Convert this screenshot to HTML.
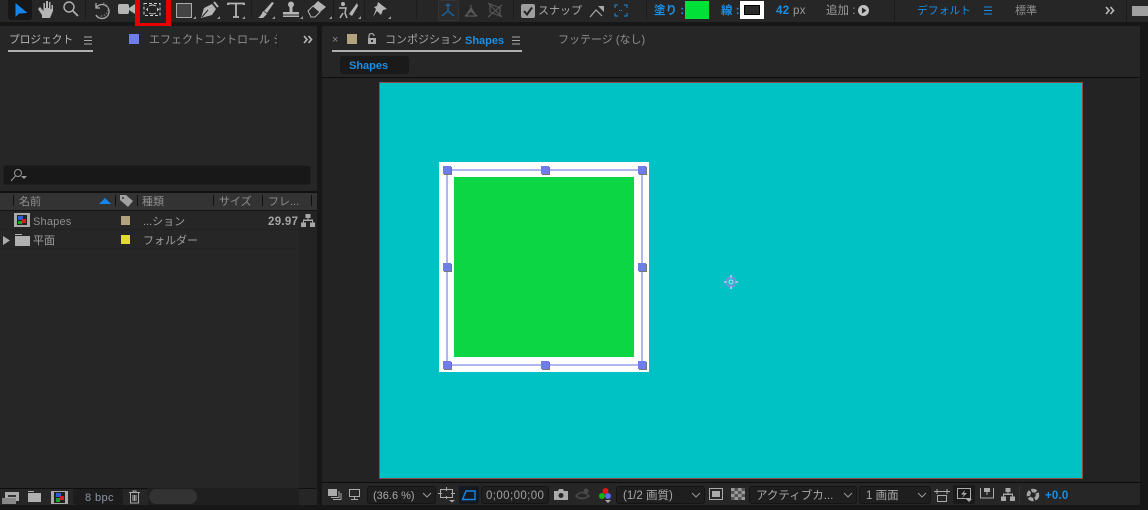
<!DOCTYPE html>
<html><head><meta charset="utf-8">
<style>
html,body{margin:0;padding:0;background:#171717;}
#r{position:relative;width:1148px;height:510px;overflow:hidden;background:#171717;font-family:"Liberation Sans","Noto Sans CJK JP",sans-serif;font-size:11px;color:#a8a8a8;}
#r div,#r svg,#r span.t{position:absolute;}
.t{white-space:nowrap;line-height:14px;}
.b{color:#1a8fe3;}
.dd{background:#1e1e1e;border:1px solid #141414;border-radius:3px;box-sizing:border-box;height:18px;}
.h{background:#6f7de8;width:8px;height:8px;box-shadow:1px 1px 0 #777;}
.sep{background:#1c1c1c;width:1px;}
.tk{background:#111;width:1px;height:11px;top:195px;}
</style></head><body><div id="r">

<!-- top toolbar -->
<div style="left:0;top:0;width:1148px;height:22px;background:#262626"></div>
<div style="left:8px;top:0;width:24px;height:20px;background:#171717;border-radius:0 0 3px 3px"></div>
<svg style="left:0;top:0" width="400" height="22" fill="none">
<path d="M15.500 3 L15.500 17 L19 13.500 L27.500 13 Z" fill="#1585ea"/>
<path d="M38 9 L42 15 V18 H50 L53 11 V5 H51.500 V9 H50.500 V2 H49 V8 H48 V1 H46 V8 H45 V3 H43.500 V11 L40 7 Z" fill="#b5b5b5"/>
<circle cx="69" cy="7" r="5" stroke="#b0b0b0" stroke-width="1.400"/><path d="M73 11 L78 16" stroke="#b0b0b0" stroke-width="1.800"/>
<path d="M96 3 L96 8 L100 8 M96 8 A7 7 0 1 1 96 15" stroke="#aaa" stroke-width="1.300"/>
<path d="M103 3 A7 7 0 0 1 108 10 A7 7 0 0 1 100 16" stroke="#777" stroke-width="1.300" stroke-dasharray="1.500 1.500"/>
<rect x="118" y="4" width="11" height="10" rx="2" fill="#b5b5b5"/><path d="M129 8 L135 4 V14 L129 10Z" fill="#b5b5b5"/>
<rect x="176.500" y="3.500" width="15" height="14" fill="#444" stroke="#aaa"/>
<path d="M201 18 L204 8 L212 4 L216 9 L212 15Z" fill="#b5b5b5"/><path d="M214 2 L218 7" stroke="#b5b5b5" stroke-width="2"/><path d="M202 17 L208 10" stroke="#262626"/>
<path d="M228 5 V3.500 H244 V5 M236 4 V17 M233 17 H239" stroke="#b5b5b5" stroke-width="1.800"/>
<path d="M264 11 L272 2 L274 3 L267 13Z" fill="#b5b5b5"/><path d="M263 11 L267 14 L263 18 L258 18 Q261 16 263 11Z" fill="#b5b5b5"/>
<circle cx="291" cy="4.500" r="3" fill="#b5b5b5"/><path d="M289.500 7 H292.500 V12 H299 V14.500 H283 V12 H289.500Z" fill="#b5b5b5"/><rect x="283" y="15.500" width="16" height="1.500" fill="#b5b5b5"/>
<path d="M308 11 L313 6 L320 12 L315 17 L311 17Z" stroke="#b5b5b5" fill="none"/><path d="M313 6 L318 1 L326 7 L320 12Z" fill="#b5b5b5"/>
<circle cx="343" cy="4" r="2" fill="#b5b5b5"/><path d="M339 8 H346 L345 13 L347 18 M343 13 L340 18" stroke="#b5b5b5" stroke-width="1.500"/><path d="M349 14 L357 3 L358 6 L352 16Z" fill="#b5b5b5"/>
<path d="M378 2 L387 9 L383 10 L381 15 L377 11 L373 17 L376 9 L374 7 L377 6 Z" fill="#b5b5b5"/>
<path d="M193 19 h3 v-3Z M217 19 h3 v-3Z M242 19 h3 v-3Z M272 19 h3 v-3Z M300 19 h3 v-3Z M329 19 h3 v-3Z M358 19 h3 v-3Z M388 19 h3 v-3Z" fill="#999"/>
</svg>
<div class="sep" style="left:85px;top:0;height:20px"></div>
<div class="sep" style="left:167px;top:0;height:20px"></div>
<div class="sep" style="left:251px;top:0;height:20px"></div>
<div class="sep" style="left:333px;top:0;height:20px"></div>
<div class="sep" style="left:364px;top:0;height:20px"></div>
<div class="sep" style="left:416px;top:0;height:20px"></div>
<div class="sep" style="left:513px;top:0;height:20px"></div>
<div class="sep" style="left:646px;top:0;height:20px"></div>
<div class="sep" style="left:894px;top:0;height:22px"></div>
<div class="sep" style="left:1126px;top:0;height:22px"></div>
<div style="left:135px;top:0;width:36px;height:28px;box-sizing:border-box;border:5px solid #e60000;border-top:0;background:#232323"></div>
<svg style="left:140px;top:0" width="26" height="22" fill="none"><rect x="4" y="3.500" width="16" height="12" stroke="#cfcfcf" stroke-dasharray="3 2"/><path d="M9 6 Q12.500 4 16 6 M9 13 Q12.500 15 16 13" stroke="#cfcfcf"/><path d="M6 9.500 L8 7.500 V11.500Z M19 9.500 L17 7.500 V11.500Z" fill="#cfcfcf"/></svg>

<div style="left:438px;top:0;width:21px;height:21px;background:#2b2b2b;border:1px solid #333;box-sizing:border-box;border-radius:2px"></div>
<svg style="left:438px;top:0" width="70" height="22" fill="none">
<path d="M10 4 V11 L4 16 M10 11 L16 16" stroke="#1f5f93" stroke-width="1.500"/><path d="M7 6 L10 3 L13 6Z" fill="#1f5f93"/>
<path d="M33 5 V11 L27 16 M33 11 L39 16 M28 16 L33 8 L38 16Z" stroke="#5a5a5a" stroke-width="1.200"/>
<path d="M52 4 L62 8 V16 L52 12Z M50 3 L64 17 M64 5 L50 17" stroke="#555" stroke-width="1.200"/>
</svg>
<div style="left:521px;top:4px;width:14px;height:14px;background:#9e9e9e;border-radius:2px"></div>
<svg style="left:521px;top:4px" width="14" height="14" fill="none"><path d="M3 7 L6 10.500 L11 3.500" stroke="#222" stroke-width="2"/></svg>
<span class="t" style="left:538px;top:4px;font-size:11px;color:#a8a8a8">スナップ</span>
<svg style="left:589px;top:3px" width="16" height="16" fill="none"><path d="M1 14 L7 7 L13 13" stroke="#aaa" stroke-width="1.200"/><path d="M9 3 H15 V9Z" fill="#aaa"/></svg>
<svg style="left:614px;top:4px" width="14" height="13" fill="none"><path d="M1 4 V1 H4 M10 1 H13 V4 M1 9 V12 H4 M10 12 H13 V9" stroke="#1a8fe3"/><path d="M5 6.500 H9" stroke="#1a8fe3" stroke-dasharray="1 1"/></svg>
<span class="t b" style="left:654px;top:4px;font-size:11.500px;font-weight:bold">塗り :</span>
<div style="left:685px;top:1px;width:24px;height:18px;background:#00e038"></div>
<span class="t b" style="left:721px;top:4px;font-size:11.500px;font-weight:bold">線 :</span>
<div style="left:740px;top:1px;width:24px;height:18px;background:#fff"></div>
<div style="left:744px;top:5px;width:16px;height:10px;background:#2a2a2a;border:1px solid #000;box-sizing:border-box"></div>
<span class="t b" style="left:776px;top:4px;font-size:11.500px;font-weight:bold;letter-spacing:.4px">42</span>
<span class="t" style="left:793px;top:4px;font-size:11.500px;color:#9a9a9a;letter-spacing:.4px">px</span>
<span class="t" style="left:826px;top:4px;font-size:11.500px;color:#999">追加 :</span>
<div style="left:858px;top:5px;width:11px;height:11px;border-radius:50%;background:#c0c0c0"></div>
<svg style="left:858px;top:5px" width="11" height="11"><path d="M4 2.500 L8.500 5.500 L4 8.500Z" fill="#262626"/></svg>
<span class="t b" style="left:917px;top:4px;font-size:10.800px">デフォルト</span>
<svg style="left:984px;top:6px" width="9" height="9"><path d="M0 1 H8 M0 4.500 H8 M0 8 H8" stroke="#1a8fe3"/></svg>
<span class="t" style="left:1015px;top:4px;font-size:11px;color:#8f8f8f">標準</span>
<svg style="left:1105px;top:6px" width="10" height="9" fill="none"><path d="M1 1 L4 4.500 L1 8 M5.500 1 L8.500 4.500 L5.500 8" stroke="#b5b5b5" stroke-width="1.700"/></svg>
<div style="left:1132px;top:6px;width:16px;height:10px;background:#a0a0a0"></div>

<!-- left panel -->
<div style="left:0;top:26px;width:317px;height:479px;background:#262626"></div>
<span class="t" style="left:9px;top:33px;font-size:10.700px;color:#b5b5b5">プロジェクト</span>
<svg style="left:84px;top:36px" width="9" height="9"><path d="M0 1 H8 M0 4.500 H8 M0 8 H8" stroke="#aaa"/></svg>
<div style="left:8px;top:50px;width:85px;height:2px;background:#b0b0b0"></div>
<div style="left:129px;top:34px;width:10px;height:10px;background:#6f7de8"></div>
<span class="t" style="left:149px;top:33px;font-size:11px;color:#8f8f8f;width:128px;overflow:hidden">エフェクトコントロール シ</span>
<div style="left:277px;top:34px;width:1px;height:14px;background:#1e1e1e"></div>
<svg style="left:303px;top:35px" width="10" height="9" fill="none"><path d="M1 1 L4 4.500 L1 8 M5.500 1 L8.500 4.500 L5.500 8" stroke="#b5b5b5" stroke-width="1.700"/></svg>

<div style="left:3px;top:165px;width:308px;height:20px;background:#181818;border-radius:3px;border:1px solid #1f1f1f;box-sizing:border-box"></div>
<svg style="left:10px;top:168px" width="20" height="14" fill="none"><circle cx="8" cy="5" r="3.500" stroke="#999"/><path d="M5.500 8 L1 13" stroke="#999"/><path d="M11 8 H17 L14 11Z" fill="#999"/></svg>

<div style="left:0;top:191px;width:317px;height:2px;background:#111"></div>
<div style="left:0;top:193px;width:317px;height:18px;background:#333"></div>
<div style="left:0;top:210px;width:317px;height:1px;background:#141414"></div>
<div class="tk" style="left:13px"></div><div class="tk" style="left:115px"></div><div class="tk" style="left:137px"></div><div class="tk" style="left:213px"></div><div class="tk" style="left:262px"></div><div class="tk" style="left:311px"></div>
<span class="t" style="left:19px;top:195px;font-size:11px;color:#8f8f8f">名前</span>
<svg style="left:99px;top:198px" width="12" height="6"><path d="M0 6 L6 0 L12 6Z" fill="#1585ea"/></svg>
<svg style="left:120px;top:195px" width="13" height="12"><path d="M0 0 H6 L13 6 L8 12 L0 5Z" fill="#a0a0a0"/><circle cx="3" cy="3" r="1" fill="#333"/></svg>
<span class="t" style="left:142px;top:195px;font-size:11px;color:#8f8f8f">種類</span>
<span class="t" style="left:219px;top:195px;font-size:11px;color:#8f8f8f">サイズ</span>
<span class="t" style="left:268px;top:195px;font-size:11px;color:#8f8f8f">フレ...</span>

<div style="left:0;top:229px;width:299px;height:1px;background:#222"></div>
<div style="left:0;top:248px;width:299px;height:1px;background:#222"></div>
<div style="left:299px;top:211px;width:18px;height:277px;background:#232323"></div>

<svg style="left:14px;top:213px" width="16" height="14"><rect width="16" height="14" fill="#aaa"/><rect x="3" y="2" width="10" height="10" fill="#222"/><rect x="4" y="3" width="5" height="4" fill="#2e5fd0"/><rect x="8" y="6" width="4" height="4" fill="#d02020"/><rect x="4" y="8" width="4" height="3" fill="#20a030"/></svg>
<span class="t" style="left:33px;top:215px;font-size:11px;color:#8f8f8f;letter-spacing:.2px">Shapes</span>
<div style="left:121px;top:216px;width:9px;height:9px;background:#b3a27e"></div>
<span class="t" style="left:143px;top:215px;font-size:11px;color:#a0a0a0">...ション</span>
<span class="t" style="left:268px;top:215px;font-size:11.500px;color:#a5a5a5;font-weight:bold;letter-spacing:.3px">29.97</span>
<svg style="left:301px;top:214px" width="14" height="13" fill="#a8a8a8"><rect x="4.500" y="0" width="5" height="4"/><rect x="6.500" y="4" width="1" height="2"/><rect x="2" y="5.500" width="10" height="1.500"/><rect x="2" y="7" width="1" height="2"/><rect x="11" y="7" width="1" height="2"/><rect x="0" y="8.500" width="5" height="4.500"/><rect x="9" y="8.500" width="5" height="4.500"/></svg>
<svg style="left:3px;top:236px" width="8" height="9"><path d="M0 0 L7 4.500 L0 9Z" fill="#aaa"/></svg>
<svg style="left:15px;top:234px" width="15" height="12"><path d="M0 0 H7 V1 H0Z M0 2 H15 V12 H0Z" fill="#b0b0b0"/></svg>
<span class="t" style="left:33px;top:234px;font-size:11px;color:#a0a0a0">平面</span>
<div style="left:121px;top:235px;width:9px;height:9px;background:#e3d930"></div>
<span class="t" style="left:143px;top:234px;font-size:11px;color:#a0a0a0">フォルダー</span>

<div style="left:0;top:488px;width:316px;height:1px;background:#0f0f0f"></div>
<div style="left:0;top:489px;width:317px;height:16px;background:#262626"></div>
<div style="left:148px;top:488px;width:151px;height:17px;background:#1f1f1f"></div>
<div style="left:149px;top:489px;width:48px;height:15px;background:#333;border-radius:8px"></div>
<svg style="left:1px;top:491px" width="20" height="14"><rect x="4" y="1" width="14" height="9" fill="#aaa"/><rect x="7" y="4" width="8" height="2" fill="#333"/><rect x="1" y="7" width="14" height="6" fill="#888"/></svg>
<svg style="left:28px;top:491px" width="14" height="11"><path d="M0 0 H6 V1 H0Z M0 2 H13 V11 H0Z" fill="#b0b0b0"/></svg>
<svg style="left:51px;top:491px" width="17" height="13"><rect width="17" height="13" fill="#aaa"/><rect x="3" y="1" width="11" height="11" fill="#222"/><rect x="5" y="2" width="5" height="4" fill="#2e5fd0"/><rect x="9" y="5" width="4" height="4" fill="#d02020"/><rect x="5" y="7" width="4" height="4" fill="#20a030"/></svg>
<div style="left:73px;top:489px;width:50px;height:16px;background:#1c1c1c;border-radius:3px"></div>
<span class="t" style="left:85px;top:491px;font-size:11px;color:#8b96aa;letter-spacing:.4px">8 bpc</span>
<svg style="left:129px;top:490px" width="12" height="14" fill="none"><path d="M0 2.500 H11 M4 2 V1 H7 V2 M1.500 3 V13 H9.500 V3 M4 5 V11 M5.500 5 V11 M7 5 V11" stroke="#aaa"/></svg>

<!-- comp panel -->
<div style="left:322px;top:26px;width:819px;height:479px;background:#262626"></div>
<span class="t" style="left:332px;top:33px;font-size:11px;color:#8a8a8a">×</span>
<div style="left:347px;top:34px;width:10px;height:10px;background:#b3a27e"></div>
<svg style="left:367px;top:33px" width="10" height="11" fill="none"><path d="M2 5 V3 A2.500 2.500 0 0 1 7 3" stroke="#aaa" stroke-width="1.200"/><rect x="1" y="5" width="8" height="6" fill="#aaa"/><rect x="4" y="7" width="2" height="2" fill="#262626"/></svg>
<span class="t" style="left:385px;top:33px;font-size:11px;color:#a5a5a5">コンポジション</span>
<span class="t b" style="left:465px;top:34px;font-size:11px;font-weight:bold">Shapes</span>
<svg style="left:512px;top:36px" width="9" height="9"><path d="M0 1 H8 M0 4.500 H8 M0 8 H8" stroke="#aaa"/></svg>
<div style="left:332px;top:50px;width:190px;height:2px;background:#b0b0b0"></div>
<span class="t" style="left:558px;top:33px;font-size:11px;color:#8f8f8f">フッテージ (なし)</span>
<div style="left:340px;top:56px;width:69px;height:18px;background:#1a1a1a;border-radius:3px"></div>
<span class="t b" style="left:349px;top:59px;font-size:11px;font-weight:bold">Shapes</span>
<div style="left:322px;top:77px;width:819px;height:1px;background:#0d0d0d"></div>
<div style="left:322px;top:78px;width:819px;height:404px;background:#232323"></div>
<div style="left:1140px;top:26px;width:8px;height:484px;background:#171717"></div>

<!-- canvas -->
<div style="left:380px;top:83px;width:702px;height:395px;background:#00c1c4;box-shadow:0 0 0 1px #8c4a48"></div>
<div style="left:439px;top:162px;width:210px;height:210px;background:#fff"></div>
<div style="left:454px;top:177px;width:180px;height:180px;background:#0dd644"></div>
<div style="left:446px;top:169px;width:197px;height:197px;box-sizing:border-box;border:2px solid #b0b6f0"></div>
<div class="h" style="left:443px;top:166px"></div><div class="h" style="left:541px;top:166px"></div><div class="h" style="left:638px;top:166px"></div>
<div class="h" style="left:443px;top:263px"></div><div class="h" style="left:638px;top:263px"></div>
<div class="h" style="left:443px;top:361px"></div><div class="h" style="left:541px;top:361px"></div><div class="h" style="left:638px;top:361px"></div>
<svg style="left:722px;top:273px" width="18" height="18" fill="none"><circle cx="9" cy="9" r="4.500" stroke="#7f8fe0" stroke-width="1.800"/><circle cx="9" cy="9" r="2" stroke="#d5dcf5"/><path d="M9 2 V4.500 M9 13.500 V16 M2 9 H4.500 M13.500 9 H16" stroke="#c5cdf0" stroke-width="1.600"/></svg>

<!-- comp bottom bar -->
<div style="left:322px;top:482px;width:819px;height:1px;background:#0d0d0d"></div>
<svg style="left:327px;top:488px" width="40" height="14" fill="none"><rect x="1" y="1" width="9" height="7" fill="#aaa"/><path d="M4 9.500 H12 V3 M6 11.500 H14 V5" stroke="#aaa"/>
<rect x="22.500" y="1.500" width="10" height="7" stroke="#aaa"/><path d="M27.500 9 V11 M24 11.500 H31" stroke="#aaa"/></svg>
<div class="dd" style="left:367px;top:486px;width:69px"></div>
<span class="t" style="left:373px;top:489px;font-size:11px;color:#a8a8a8">(36.6 %)</span>
<svg style="left:422px;top:492px" width="10" height="6" fill="none"><path d="M1 1 L5 5 L9 1" stroke="#999"/></svg>
<svg style="left:438px;top:487px" width="18" height="16" fill="none"><rect x="2.500" y="2.500" width="12" height="8" stroke="#aaa"/><path d="M8.500 0 V4 M8.500 9 V12 M0 6.500 H4 M13 6.500 H17" stroke="#aaa"/><path d="M11 13 H17 L14 15.500Z" fill="#aaa"/></svg>
<div style="left:459px;top:486px;width:20px;height:18px;background:#151a20;border-radius:2px"></div>
<svg style="left:461px;top:488px" width="16" height="14" fill="none"><path d="M1.500 11.500 L5 3 H14 V11.500 Z" stroke="#1585ea" stroke-width="1.400"/></svg>
<div class="dd" style="left:481px;top:486px;width:68px"></div>
<span class="t" style="left:486px;top:489px;font-size:11.500px;color:#a0a0a0;letter-spacing:.4px">0;00;00;00</span>
<svg style="left:554px;top:488px" width="14" height="13"><path d="M0 3 H4 L5 1 H9 L10 3 H14 V12 H0Z" fill="#aaa"/><circle cx="7" cy="7.500" r="2.500" fill="#262626"/></svg>
<svg style="left:575px;top:487px" width="16" height="14" fill="none"><path d="M1 9 Q7 2 14 9 Q7 14 1 9Z" stroke="#4a4a4a" stroke-width="1.600"/><circle cx="11" cy="4" r="2.500" fill="#4a4a4a"/></svg>
<svg style="left:598px;top:487px" width="16" height="16"><circle cx="7.500" cy="4" r="3" fill="#e01515"/><circle cx="4" cy="9" r="3" fill="#18b018"/><circle cx="10" cy="9" r="3" fill="#5868f0"/><path d="M7 13 H13 L10 16Z" fill="#aaa"/></svg>
<div class="dd" style="left:616px;top:486px;width:89px"></div>
<span class="t" style="left:623px;top:489px;font-size:11.500px;color:#a8a8a8">(1/2 画質)</span>
<svg style="left:691px;top:492px" width="10" height="6" fill="none"><path d="M1 1 L5 5 L9 1" stroke="#999"/></svg>
<svg style="left:709px;top:488px" width="14" height="13" fill="none"><rect x=".5" y=".5" width="13" height="11" stroke="#aaa"/><rect x="3" y="3" width="8" height="6" fill="#aaa"/></svg>
<svg style="left:731px;top:488px" width="14" height="12"><rect width="14" height="12" fill="#555"/><path d="M0 0 H3.500 V3 H0Z M7 0 H10.500 V3 H7Z M3.500 3 H7 V6 H3.500Z M10.500 3 H14 V6 H10.500Z M0 6 H3.500 V9 H0Z M7 6 H10.500 V9 H7Z M3.500 9 H7 V12 H3.500Z M10.500 9 H14 V12 H10.500Z" fill="#999"/></svg>
<div class="dd" style="left:749px;top:486px;width:108px"></div>
<span class="t" style="left:756px;top:489px;font-size:11.500px;color:#a8a8a8">アクティブカ...</span>
<svg style="left:843px;top:492px" width="10" height="6" fill="none"><path d="M1 1 L5 5 L9 1" stroke="#999"/></svg>
<div class="dd" style="left:859px;top:486px;width:72px"></div>
<span class="t" style="left:866px;top:489px;font-size:11.500px;color:#a8a8a8">1 画面</span>
<svg style="left:917px;top:492px" width="10" height="6" fill="none"><path d="M1 1 L5 5 L9 1" stroke="#999"/></svg>
<svg style="left:934px;top:487px" width="16" height="16" fill="none"><path d="M0 4.500 H3 M13 4.500 H16 M3 2 V7 M13 2 V7 M3 4.500 H13" stroke="#aaa"/><rect x="3.500" y="8.500" width="9" height="6" stroke="#aaa"/></svg>
<div style="left:953px;top:485px;width:22px;height:19px;background:#1a1a1a;border-radius:2px"></div>
<svg style="left:957px;top:488px" width="16" height="14" fill="none"><rect x=".5" y=".5" width="13" height="10" stroke="#aaa"/><path d="M8 2 L4 6.500 H7 L5 10 L10 5 H7Z" fill="#aaa"/><path d="M9 11 H15 L12 14Z" fill="#aaa"/></svg>
<svg style="left:980px;top:487px" width="14" height="13"><path d="M.5 1 V11 H13.500 V1" fill="none" stroke="#aaa"/><path d="M4 1 H10 V5 H7.500 V8 H6.500 V5 H4Z" fill="#aaa"/></svg>
<svg style="left:1001px;top:488px" width="14" height="13" fill="#a8a8a8"><rect x="4.500" y="0" width="5" height="4"/><rect x="6.500" y="4" width="1" height="2"/><rect x="2" y="5.500" width="10" height="1.500"/><rect x="2" y="7" width="1" height="2"/><rect x="11" y="7" width="1" height="2"/><rect x="0" y="8.500" width="5" height="4.500"/><rect x="9" y="8.500" width="5" height="4.500"/></svg>
<div class="sep" style="left:1019px;top:486px;height:17px;background:#333"></div>
<svg style="left:1026px;top:488px" width="14" height="14" fill="none"><circle cx="7" cy="7" r="4.500" stroke="#a5a5a5" stroke-width="3.500" stroke-dasharray="5 1.500"/></svg>
<span class="t b" style="left:1045px;top:489px;font-size:11.500px;font-weight:bold;letter-spacing:.2px">+0.0</span>

</div></body></html>
